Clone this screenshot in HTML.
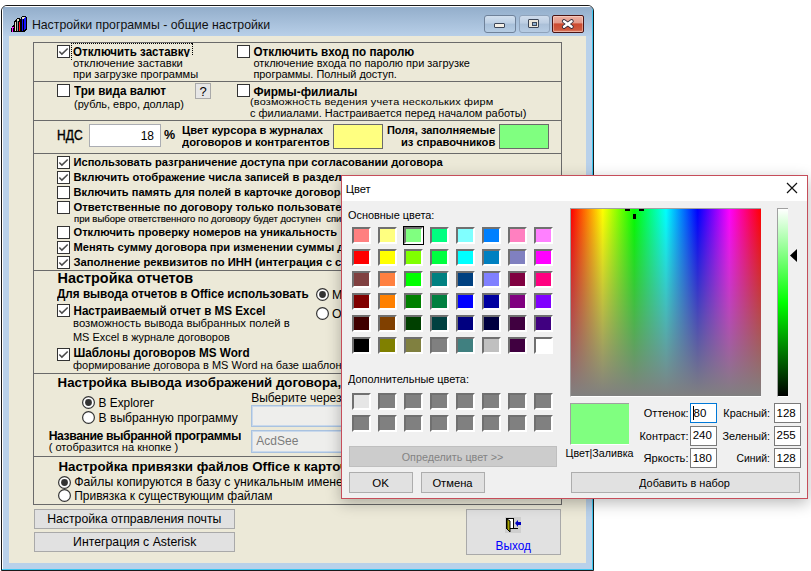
<!DOCTYPE html>
<html><head><meta charset="utf-8"><style>
html,body{margin:0;padding:0;}
body{width:811px;height:571px;overflow:hidden;position:relative;background:#fff;font-family:"Liberation Sans", sans-serif;}
div{box-sizing:content-box;}
</style></head><body>
<div style="position:absolute;left:1px;top:5px;width:591px;height:564px;border:1px solid #1a1a1a;border-top-left-radius:6px;border-top-right-radius:6px;background:#b9d1ea;overflow:hidden"><div style="position:absolute;left:0;top:0;right:0;height:1px;background:#fff"></div><div style="position:absolute;left:0;top:0;bottom:0;width:1px;background:#fff"></div><div style="position:absolute;right:0;top:0;bottom:0;width:1px;background:#3bc6f0"></div><div style="position:absolute;left:0;bottom:0;right:0;height:1px;background:#3bc6f0"></div><div style="position:absolute;left:1px;top:1px;right:1px;height:29px;background:linear-gradient(#93aecb,#b8cfe8)"></div></div>
<div style="position:absolute;left:9px;top:36px;width:577px;height:527px;background:#ece9d8"></div>
<svg style="position:absolute;left:11px;top:16px" width="16" height="16" shape-rendering="crispEdges"><rect x="11" y="0" width="1" height="1" fill="#000"/><rect x="12" y="0" width="1" height="1" fill="#000"/><rect x="13" y="0" width="1" height="1" fill="#000"/><rect x="14" y="0" width="1" height="1" fill="#000"/><rect x="10" y="1" width="1" height="1" fill="#000"/><rect x="11" y="1" width="1" height="1" fill="#e6e2c8"/><rect x="12" y="1" width="1" height="1" fill="#e6e2c8"/><rect x="13" y="1" width="1" height="1" fill="#e6e2c8"/><rect x="14" y="1" width="1" height="1" fill="#1414ff"/><rect x="15" y="1" width="1" height="1" fill="#000"/><rect x="6" y="2" width="1" height="1" fill="#000"/><rect x="7" y="2" width="1" height="1" fill="#000"/><rect x="8" y="2" width="1" height="1" fill="#000"/><rect x="10" y="2" width="1" height="1" fill="#000"/><rect x="11" y="2" width="1" height="1" fill="#e6e2c8"/><rect x="12" y="2" width="1" height="1" fill="#e6e2c8"/><rect x="13" y="2" width="1" height="1" fill="#1414ff"/><rect x="14" y="2" width="1" height="1" fill="#1414ff"/><rect x="15" y="2" width="1" height="1" fill="#000"/><rect x="5" y="3" width="1" height="1" fill="#000"/><rect x="6" y="3" width="1" height="1" fill="#e6e2c8"/><rect x="7" y="3" width="1" height="1" fill="#e6e2c8"/><rect x="8" y="3" width="1" height="1" fill="#000"/><rect x="9" y="3" width="1" height="1" fill="#000"/><rect x="10" y="3" width="1" height="1" fill="#000"/><rect x="11" y="3" width="1" height="1" fill="#1414ff"/><rect x="12" y="3" width="1" height="1" fill="#000"/><rect x="13" y="3" width="1" height="1" fill="#1414ff"/><rect x="14" y="3" width="1" height="1" fill="#1414ff"/><rect x="15" y="3" width="1" height="1" fill="#000"/><rect x="4" y="4" width="1" height="1" fill="#000"/><rect x="5" y="4" width="1" height="1" fill="#000"/><rect x="6" y="4" width="1" height="1" fill="#e6e2c8"/><rect x="7" y="4" width="1" height="1" fill="#e6e2c8"/><rect x="8" y="4" width="1" height="1" fill="#000"/><rect x="9" y="4" width="1" height="1" fill="#000"/><rect x="10" y="4" width="1" height="1" fill="#000"/><rect x="11" y="4" width="1" height="1" fill="#1414ff"/><rect x="12" y="4" width="1" height="1" fill="#000"/><rect x="13" y="4" width="1" height="1" fill="#1414ff"/><rect x="14" y="4" width="1" height="1" fill="#1414ff"/><rect x="15" y="4" width="1" height="1" fill="#000"/><rect x="3" y="5" width="1" height="1" fill="#000"/><rect x="4" y="5" width="1" height="1" fill="#000"/><rect x="5" y="5" width="1" height="1" fill="#000"/><rect x="6" y="5" width="1" height="1" fill="#9aa49c"/><rect x="7" y="5" width="1" height="1" fill="#000"/><rect x="8" y="5" width="1" height="1" fill="#000"/><rect x="9" y="5" width="1" height="1" fill="#000"/><rect x="10" y="5" width="1" height="1" fill="#000"/><rect x="11" y="5" width="1" height="1" fill="#1414ff"/><rect x="12" y="5" width="1" height="1" fill="#000"/><rect x="13" y="5" width="1" height="1" fill="#1414ff"/><rect x="14" y="5" width="1" height="1" fill="#1414ff"/><rect x="15" y="5" width="1" height="1" fill="#000"/><rect x="3" y="6" width="1" height="1" fill="#000"/><rect x="4" y="6" width="1" height="1" fill="#e6e2c8"/><rect x="5" y="6" width="1" height="1" fill="#000"/><rect x="6" y="6" width="1" height="1" fill="#9aa49c"/><rect x="7" y="6" width="1" height="1" fill="#000"/><rect x="8" y="6" width="1" height="1" fill="#ff1818"/><rect x="9" y="6" width="1" height="1" fill="#000"/><rect x="10" y="6" width="1" height="1" fill="#000"/><rect x="11" y="6" width="1" height="1" fill="#1414ff"/><rect x="12" y="6" width="1" height="1" fill="#000"/><rect x="13" y="6" width="1" height="1" fill="#1414ff"/><rect x="14" y="6" width="1" height="1" fill="#1414ff"/><rect x="15" y="6" width="1" height="1" fill="#000"/><rect x="3" y="7" width="1" height="1" fill="#000"/><rect x="4" y="7" width="1" height="1" fill="#e6e2c8"/><rect x="5" y="7" width="1" height="1" fill="#000"/><rect x="6" y="7" width="1" height="1" fill="#9aa49c"/><rect x="7" y="7" width="1" height="1" fill="#000"/><rect x="8" y="7" width="1" height="1" fill="#ff1818"/><rect x="9" y="7" width="1" height="1" fill="#000"/><rect x="10" y="7" width="1" height="1" fill="#000"/><rect x="11" y="7" width="1" height="1" fill="#1414ff"/><rect x="12" y="7" width="1" height="1" fill="#000"/><rect x="13" y="7" width="1" height="1" fill="#1414ff"/><rect x="14" y="7" width="1" height="1" fill="#1414ff"/><rect x="15" y="7" width="1" height="1" fill="#000"/><rect x="3" y="8" width="1" height="1" fill="#000"/><rect x="4" y="8" width="1" height="1" fill="#e6e2c8"/><rect x="5" y="8" width="1" height="1" fill="#000"/><rect x="6" y="8" width="1" height="1" fill="#9aa49c"/><rect x="7" y="8" width="1" height="1" fill="#000"/><rect x="8" y="8" width="1" height="1" fill="#ff1818"/><rect x="9" y="8" width="1" height="1" fill="#000"/><rect x="10" y="8" width="1" height="1" fill="#000"/><rect x="11" y="8" width="1" height="1" fill="#1414ff"/><rect x="12" y="8" width="1" height="1" fill="#000"/><rect x="13" y="8" width="1" height="1" fill="#1414ff"/><rect x="14" y="8" width="1" height="1" fill="#1414ff"/><rect x="15" y="8" width="1" height="1" fill="#000"/><rect x="2" y="9" width="1" height="1" fill="#000"/><rect x="3" y="9" width="1" height="1" fill="#000"/><rect x="4" y="9" width="1" height="1" fill="#e6e2c8"/><rect x="5" y="9" width="1" height="1" fill="#000"/><rect x="6" y="9" width="1" height="1" fill="#9aa49c"/><rect x="7" y="9" width="1" height="1" fill="#000"/><rect x="8" y="9" width="1" height="1" fill="#ff1818"/><rect x="9" y="9" width="1" height="1" fill="#000"/><rect x="10" y="9" width="1" height="1" fill="#000"/><rect x="11" y="9" width="1" height="1" fill="#1414ff"/><rect x="12" y="9" width="1" height="1" fill="#000"/><rect x="13" y="9" width="1" height="1" fill="#1414ff"/><rect x="14" y="9" width="1" height="1" fill="#1414ff"/><rect x="15" y="9" width="1" height="1" fill="#000"/><rect x="1" y="10" width="1" height="1" fill="#000"/><rect x="2" y="10" width="1" height="1" fill="#000"/><rect x="3" y="10" width="1" height="1" fill="#000"/><rect x="4" y="10" width="1" height="1" fill="#e6e2c8"/><rect x="5" y="10" width="1" height="1" fill="#000"/><rect x="6" y="10" width="1" height="1" fill="#9aa49c"/><rect x="7" y="10" width="1" height="1" fill="#000"/><rect x="8" y="10" width="1" height="1" fill="#ff1818"/><rect x="9" y="10" width="1" height="1" fill="#000"/><rect x="10" y="10" width="1" height="1" fill="#000"/><rect x="11" y="10" width="1" height="1" fill="#1414ff"/><rect x="12" y="10" width="1" height="1" fill="#000"/><rect x="13" y="10" width="1" height="1" fill="#1414ff"/><rect x="14" y="10" width="1" height="1" fill="#1414ff"/><rect x="15" y="10" width="1" height="1" fill="#000"/><rect x="1" y="11" width="1" height="1" fill="#ff10ff"/><rect x="2" y="11" width="1" height="1" fill="#ff10ff"/><rect x="3" y="11" width="1" height="1" fill="#000"/><rect x="4" y="11" width="1" height="1" fill="#e6e2c8"/><rect x="5" y="11" width="1" height="1" fill="#000"/><rect x="6" y="11" width="1" height="1" fill="#9aa49c"/><rect x="7" y="11" width="1" height="1" fill="#000"/><rect x="8" y="11" width="1" height="1" fill="#ff1818"/><rect x="9" y="11" width="1" height="1" fill="#000"/><rect x="10" y="11" width="1" height="1" fill="#000"/><rect x="11" y="11" width="1" height="1" fill="#1414ff"/><rect x="12" y="11" width="1" height="1" fill="#000"/><rect x="13" y="11" width="1" height="1" fill="#1414ff"/><rect x="14" y="11" width="1" height="1" fill="#1414ff"/><rect x="15" y="11" width="1" height="1" fill="#000"/><rect x="0" y="12" width="1" height="1" fill="#000"/><rect x="1" y="12" width="1" height="1" fill="#ff10ff"/><rect x="2" y="12" width="1" height="1" fill="#000"/><rect x="3" y="12" width="1" height="1" fill="#000"/><rect x="4" y="12" width="1" height="1" fill="#e6e2c8"/><rect x="5" y="12" width="1" height="1" fill="#000"/><rect x="6" y="12" width="1" height="1" fill="#9aa49c"/><rect x="7" y="12" width="1" height="1" fill="#000"/><rect x="8" y="12" width="1" height="1" fill="#ff1818"/><rect x="9" y="12" width="1" height="1" fill="#000"/><rect x="10" y="12" width="1" height="1" fill="#000"/><rect x="11" y="12" width="1" height="1" fill="#1414ff"/><rect x="12" y="12" width="1" height="1" fill="#000"/><rect x="13" y="12" width="1" height="1" fill="#1414ff"/><rect x="14" y="12" width="1" height="1" fill="#1414ff"/><rect x="15" y="12" width="1" height="1" fill="#000"/><rect x="0" y="13" width="1" height="1" fill="#000"/><rect x="1" y="13" width="1" height="1" fill="#ff10ff"/><rect x="2" y="13" width="1" height="1" fill="#000"/><rect x="3" y="13" width="1" height="1" fill="#000"/><rect x="4" y="13" width="1" height="1" fill="#e6e2c8"/><rect x="5" y="13" width="1" height="1" fill="#000"/><rect x="6" y="13" width="1" height="1" fill="#9aa49c"/><rect x="7" y="13" width="1" height="1" fill="#000"/><rect x="8" y="13" width="1" height="1" fill="#ff1818"/><rect x="9" y="13" width="1" height="1" fill="#000"/><rect x="10" y="13" width="1" height="1" fill="#000"/><rect x="11" y="13" width="1" height="1" fill="#1414ff"/><rect x="12" y="13" width="1" height="1" fill="#000"/><rect x="13" y="13" width="1" height="1" fill="#1414ff"/><rect x="14" y="13" width="1" height="1" fill="#000"/><rect x="15" y="13" width="1" height="1" fill="#000"/><rect x="0" y="14" width="1" height="1" fill="#000"/><rect x="1" y="14" width="1" height="1" fill="#ff10ff"/><rect x="2" y="14" width="1" height="1" fill="#000"/><rect x="3" y="14" width="1" height="1" fill="#000"/><rect x="4" y="14" width="1" height="1" fill="#e6e2c8"/><rect x="5" y="14" width="1" height="1" fill="#000"/><rect x="6" y="14" width="1" height="1" fill="#9aa49c"/><rect x="7" y="14" width="1" height="1" fill="#000"/><rect x="8" y="14" width="1" height="1" fill="#ff1818"/><rect x="9" y="14" width="1" height="1" fill="#000"/><rect x="10" y="14" width="1" height="1" fill="#000"/><rect x="11" y="14" width="1" height="1" fill="#1414ff"/><rect x="12" y="14" width="1" height="1" fill="#000"/><rect x="13" y="14" width="1" height="1" fill="#000"/><rect x="14" y="14" width="1" height="1" fill="#000"/><rect x="0" y="15" width="1" height="1" fill="#000"/><rect x="1" y="15" width="1" height="1" fill="#ff10ff"/><rect x="2" y="15" width="1" height="1" fill="#000"/><rect x="3" y="15" width="1" height="1" fill="#000"/><rect x="4" y="15" width="1" height="1" fill="#000"/><rect x="5" y="15" width="1" height="1" fill="#000"/><rect x="6" y="15" width="1" height="1" fill="#000"/><rect x="7" y="15" width="1" height="1" fill="#000"/><rect x="8" y="15" width="1" height="1" fill="#000"/><rect x="9" y="15" width="1" height="1" fill="#000"/><rect x="10" y="15" width="1" height="1" fill="#000"/><rect x="11" y="15" width="1" height="1" fill="#000"/><rect x="12" y="15" width="1" height="1" fill="#000"/><rect x="13" y="15" width="1" height="1" fill="#000"/></svg>
<div style="position:absolute;left:31.90px;top:14.53px;line-height:20px;font-size:12.31px;font-weight:normal;color:#111;white-space:nowrap;transform:scaleY(1.02);transform-origin:0 14.27px;">Настройки программы - общие настройки</div>
<div style="position:absolute;left:484px;top:15px;width:30px;height:16px;border:1px solid #6f829a;border-radius:3px;background:linear-gradient(#d2e0ef 0%,#bccfe4 45%,#a7bfd9 50%,#b6cde4 100%)"><div style="position:absolute;left:9px;top:7px;width:9px;height:3px;background:#f4efe6;border:1px solid #3c4658;border-radius:1px"></div></div>
<div style="position:absolute;left:519px;top:15px;width:29px;height:16px;border:1px solid #8fa3bb;border-radius:3px;background:linear-gradient(#cfdcec 0%,#bccde2 45%,#abc0d8 50%,#b7cce3 100%)"><div style="position:absolute;left:8px;top:3px;width:9px;height:7px;border:1px solid #3c4658;border-radius:1px;background:#ece6da"><div style="position:absolute;left:3px;top:2px;width:3px;height:2px;border:0.5px solid #3c4658;background:#8fb0d0"></div></div></div>
<div style="position:absolute;left:552px;top:15px;width:30px;height:16px;border:1px solid #4a1414;border-radius:2px;background:linear-gradient(#eeb0a2 0%,#e39a8a 42%,#cc4a30 50%,#cf5a3f 85%,#e08a74 100%);box-shadow:inset 0 0 0 1px rgba(255,230,220,0.45)"><svg style="position:absolute;left:8px;top:3px" width="14" height="11"><path d="M3 2.2 L10.6 7.8 M10.6 2.2 L3 7.8" stroke="#2e2a3a" stroke-width="4" stroke-linecap="round"/><path d="M3 2.2 L10.6 7.8 M10.6 2.2 L3 7.8" stroke="#fff" stroke-width="2.4" stroke-linecap="round"/></svg></div>
<div style="position:absolute;left:33px;top:42px;width:527px;height:461px;border:1px solid #6a6a6a"></div>
<div style="position:absolute;left:34px;top:81px;width:527px;height:1px;background:#6a6a6a"></div>
<div style="position:absolute;left:34px;top:120px;width:527px;height:1px;background:#6a6a6a"></div>
<div style="position:absolute;left:34px;top:153px;width:527px;height:1px;background:#6a6a6a"></div>
<div style="position:absolute;left:34px;top:270px;width:527px;height:1px;background:#6a6a6a"></div>
<div style="position:absolute;left:34px;top:373px;width:527px;height:1px;background:#6a6a6a"></div>
<div style="position:absolute;left:34px;top:456px;width:527px;height:1px;background:#6a6a6a"></div>
<div style="position:absolute;left:57px;top:45px;width:11px;height:11px;border:1px solid #333;background:#fff"><svg width="11" height="11" style="position:absolute;left:0;top:0"><path d="M1.3 5.5 L3.9 8.1 L9.7 2.5" fill="none" stroke="#4a4a4a" stroke-width="1.5"/></svg></div>
<div style="position:absolute;left:73.00px;top:41.99px;line-height:20px;font-size:11.56px;font-weight:bold;color:#000;white-space:nowrap;transform:scaleY(1.04);transform-origin:0 14.01px;">Отключить заставку</div>
<div style="position:absolute;left:160px;top:57px;width:32px;height:4px;background:#ece9d8"></div>
<div style="position:absolute;left:71px;top:43px;width:120px;height:16px;border-style:dotted;border-color:#000;border-width:1px 0 0 1px"></div>
<div style="position:absolute;left:192px;top:43px;width:0;height:12px;border-left:1px dotted #000"></div>
<div style="position:absolute;left:73.00px;top:52.72px;line-height:20px;font-size:11.2px;font-weight:normal;color:#000;white-space:nowrap;transform:scaleY(1.02);transform-origin:0 13.88px;">отключение заставки</div>
<div style="position:absolute;left:73.00px;top:63.97px;line-height:20px;font-size:11.05px;font-weight:normal;color:#000;white-space:nowrap;transform:scaleY(1.02);transform-origin:0 13.83px;">при загрузке программы</div>
<div style="position:absolute;left:237px;top:45px;width:11px;height:11px;border:1px solid #333;background:#fff"></div>
<div style="position:absolute;left:253.40px;top:41.76px;line-height:20px;font-size:11.66px;font-weight:bold;color:#000;white-space:nowrap;transform:scaleY(1.04);transform-origin:0 14.04px;">Отключить вход по паролю</div>
<div style="position:absolute;left:253.40px;top:52.80px;line-height:20px;font-size:10.97px;font-weight:normal;color:#000;white-space:nowrap;transform:scaleY(1.02);transform-origin:0 13.80px;">отключение входа по паролю при загрузке</div>
<div style="position:absolute;left:253.40px;top:64.02px;line-height:20px;font-size:10.92px;font-weight:normal;color:#000;white-space:nowrap;transform:scaleY(1.02);transform-origin:0 13.78px;">программы. Полный доступ.</div>
<div style="position:absolute;left:57px;top:84px;width:11px;height:11px;border:1px solid #333;background:#fff"></div>
<div style="position:absolute;left:74.00px;top:80.76px;line-height:20px;font-size:11.67px;font-weight:bold;color:#000;white-space:nowrap;transform:scaleY(1.04);transform-origin:0 14.04px;">Три вида валют</div>
<div style="position:absolute;left:74.00px;top:93.61px;line-height:20px;font-size:10.93px;font-weight:normal;color:#000;white-space:nowrap;transform:scaleY(1.02);transform-origin:0 13.79px;">(рубль, евро, доллар)</div>
<div style="position:absolute;left:195px;top:83px;width:14px;height:14px;border:1px solid #a9a9a9;background:#e6e6e6"></div>
<div style="position:absolute;left:199.50px;top:81.50px;line-height:20px;font-size:13px;font-weight:normal;color:#000;white-space:nowrap;">?</div>
<div style="position:absolute;left:237px;top:84px;width:11px;height:11px;border:1px solid #333;background:#fff"></div>
<div style="position:absolute;left:253.40px;top:82.19px;line-height:20px;font-size:11.85px;font-weight:bold;color:#000;white-space:nowrap;transform:scaleY(1.04);transform-origin:0 14.11px;">Фирмы-филиалы</div>
<div style="position:absolute;left:250.00px;top:90.62px;line-height:20px;font-size:10.9px;font-weight:normal;color:#000;white-space:nowrap;letter-spacing:0.177px;transform:scaleY(0.9);transform-origin:0 13.78px;">(возможность ведения учета нескольких фирм</div>
<div style="position:absolute;left:250.00px;top:102.59px;line-height:20px;font-size:11.01px;font-weight:normal;color:#000;white-space:nowrap;transform:scaleY(1.02);transform-origin:0 13.81px;">с филиалами. Настраивается перед началом работы)</div>
<div style="position:absolute;left:57.40px;top:125.52px;line-height:20px;font-size:13.8px;font-weight:normal;color:#000;white-space:nowrap;transform:scale(0.8746,1.0);transform-origin:0 14.78px;-webkit-text-stroke:0.35px #000;">НДС</div>
<div style="position:absolute;left:89px;top:124px;width:70px;height:21px;border:1px solid #abadb3;background:#fff"></div>
<div style="position:absolute;right:657.00px;text-align:right;top:125.54px;line-height:20px;font-size:12px;font-weight:normal;color:#000;white-space:nowrap;transform:scaleY(1.02);transform-origin:0 14.16px;">18</div>
<div style="position:absolute;left:163.90px;top:125.37px;line-height:20px;font-size:12.5px;font-weight:bold;color:#000;white-space:nowrap;transform:scaleY(1.04);transform-origin:0 14.33px;">%</div>
<div style="position:absolute;left:182.00px;top:120.11px;line-height:20px;font-size:11.22px;font-weight:bold;color:#000;white-space:nowrap;transform:scaleY(1.04);transform-origin:0 13.89px;">Цвет курсора в журналах</div>
<div style="position:absolute;left:182.00px;top:131.79px;line-height:20px;font-size:11.28px;font-weight:bold;color:#000;white-space:nowrap;transform:scaleY(1.04);transform-origin:0 13.91px;">договоров и контрагентов</div>
<div style="position:absolute;left:333px;top:124px;width:48px;height:23px;background:#ffff80;border:1px solid #6a6a6a"></div>
<div style="position:absolute;right:315.70px;text-align:right;top:120.17px;line-height:20px;font-size:11.04px;font-weight:bold;color:#000;white-space:nowrap;transform:scaleY(1.04);transform-origin:0 13.83px;">Поля, заполняемые</div>
<div style="position:absolute;right:315.70px;text-align:right;top:131.81px;line-height:20px;font-size:11.23px;font-weight:bold;color:#000;white-space:nowrap;transform:scaleY(1.04);transform-origin:0 13.89px;">из справочников</div>
<div style="position:absolute;left:499px;top:124px;width:48px;height:23px;background:#80ff80;border:1px solid #6a6a6a"></div>
<div style="position:absolute;left:57px;top:156px;width:11px;height:11px;border:1px solid #333;background:#fff"><svg width="11" height="11" style="position:absolute;left:0;top:0"><path d="M1.3 5.5 L3.9 8.1 L9.7 2.5" fill="none" stroke="#4a4a4a" stroke-width="1.5"/></svg></div>
<div style="position:absolute;left:73.50px;top:151.95px;line-height:20px;font-size:11.12px;font-weight:bold;color:#000;white-space:nowrap;transform:scaleY(1.04);transform-origin:0 13.85px;">Использовать разграничение доступа при согласовании договора</div>
<div style="position:absolute;left:57px;top:171px;width:11px;height:11px;border:1px solid #333;background:#fff"><svg width="11" height="11" style="position:absolute;left:0;top:0"><path d="M1.3 5.5 L3.9 8.1 L9.7 2.5" fill="none" stroke="#4a4a4a" stroke-width="1.5"/></svg></div>
<div style="position:absolute;left:73.50px;top:166.91px;line-height:20px;font-size:11.22px;font-weight:bold;color:#000;white-space:nowrap;transform:scaleY(1.04);transform-origin:0 13.89px;">Включить отображение числа записей в разделах журнала</div>
<div style="position:absolute;left:57px;top:186px;width:11px;height:11px;border:1px solid #333;background:#fff"></div>
<div style="position:absolute;left:73.50px;top:181.96px;line-height:20px;font-size:11.07px;font-weight:bold;color:#000;white-space:nowrap;transform:scaleY(1.04);transform-origin:0 13.84px;">Включить память для полей в карточке договора</div>
<div style="position:absolute;left:57px;top:201px;width:11px;height:11px;border:1px solid #333;background:#fff"></div>
<div style="position:absolute;left:73.50px;top:196.89px;line-height:20px;font-size:11.27px;font-weight:bold;color:#000;white-space:nowrap;transform:scaleY(1.04);transform-origin:0 13.91px;">Ответственные по договору только пользователи</div>
<div style="position:absolute;left:57px;top:226px;width:11px;height:11px;border:1px solid #333;background:#fff"></div>
<div style="position:absolute;left:73.50px;top:221.95px;line-height:20px;font-size:11.12px;font-weight:bold;color:#000;white-space:nowrap;transform:scaleY(1.04);transform-origin:0 13.85px;">Отключить проверку номеров на уникальность</div>
<div style="position:absolute;left:57px;top:241px;width:11px;height:11px;border:1px solid #333;background:#fff"><svg width="11" height="11" style="position:absolute;left:0;top:0"><path d="M1.3 5.5 L3.9 8.1 L9.7 2.5" fill="none" stroke="#4a4a4a" stroke-width="1.5"/></svg></div>
<div style="position:absolute;left:73.50px;top:236.95px;line-height:20px;font-size:11.12px;font-weight:bold;color:#000;white-space:nowrap;transform:scaleY(1.04);transform-origin:0 13.85px;">Менять сумму договора при изменении суммы допсоглашений</div>
<div style="position:absolute;left:57px;top:256px;width:11px;height:11px;border:1px solid #333;background:#fff"><svg width="11" height="11" style="position:absolute;left:0;top:0"><path d="M1.3 5.5 L3.9 8.1 L9.7 2.5" fill="none" stroke="#4a4a4a" stroke-width="1.5"/></svg></div>
<div style="position:absolute;left:73.50px;top:251.90px;line-height:20px;font-size:11.26px;font-weight:bold;color:#000;white-space:nowrap;transform:scaleY(1.04);transform-origin:0 13.90px;">Заполнение реквизитов по ИНН (интеграция с сервисом)</div>
<div style="position:absolute;left:74.00px;top:208.71px;line-height:20px;font-size:9.5px;font-weight:normal;color:#000;white-space:nowrap;transform:scaleY(1.02);transform-origin:0 13.29px;-webkit-text-stroke:0.15px #000;">при выборе ответственного по договору будет доступен&nbsp;&nbsp;список</div>
<div style="position:absolute;left:57.50px;top:267.79px;line-height:20px;font-size:14.45px;font-weight:bold;color:#000;white-space:nowrap;">Настройка отчетов</div>
<div style="position:absolute;left:57.00px;top:283.94px;line-height:20px;font-size:11.73px;font-weight:bold;color:#000;white-space:nowrap;transform:scaleY(1.04);transform-origin:0 14.06px;">Для вывода отчетов в Office использовать</div>
<svg style="position:absolute;left:316px;top:288px" width="13" height="13"><circle cx="6.5" cy="6.5" r="5.9" fill="#fff" stroke="#333" stroke-width="1.2"/><circle cx="6.5" cy="6.5" r="3.4" fill="#333"/></svg>
<div style="position:absolute;left:332.00px;top:284.94px;line-height:20px;font-size:12.3px;font-weight:normal;color:#000;white-space:nowrap;transform:scaleY(1.02);transform-origin:0 14.26px;">MS Office</div>
<svg style="position:absolute;left:316px;top:307px" width="13" height="13"><circle cx="6.5" cy="6.5" r="5.9" fill="#fff" stroke="#333" stroke-width="1.2"/></svg>
<div style="position:absolute;left:332.00px;top:303.54px;line-height:20px;font-size:12.3px;font-weight:normal;color:#000;white-space:nowrap;transform:scaleY(1.02);transform-origin:0 14.26px;">OpenOffice</div>
<div style="position:absolute;left:57px;top:304px;width:11px;height:11px;border:1px solid #333;background:#fff"><svg width="11" height="11" style="position:absolute;left:0;top:0"><path d="M1.3 5.5 L3.9 8.1 L9.7 2.5" fill="none" stroke="#4a4a4a" stroke-width="1.5"/></svg></div>
<div style="position:absolute;left:73.50px;top:301.18px;line-height:20px;font-size:11.61px;font-weight:bold;color:#000;white-space:nowrap;transform:scaleY(1.04);transform-origin:0 14.02px;">Настраиваемый отчет в MS Excel</div>
<div style="position:absolute;left:73.00px;top:312.87px;line-height:20px;font-size:11.34px;font-weight:normal;color:#000;white-space:nowrap;transform:scaleY(1.02);transform-origin:0 13.93px;">возможность вывода выбранных полей в</div>
<div style="position:absolute;left:73.00px;top:326.70px;line-height:20px;font-size:10.96px;font-weight:normal;color:#000;white-space:nowrap;transform:scaleY(1.02);transform-origin:0 13.80px;">MS Excel в журнале договоров</div>
<div style="position:absolute;left:57px;top:348px;width:11px;height:11px;border:1px solid #333;background:#fff"><svg width="11" height="11" style="position:absolute;left:0;top:0"><path d="M1.3 5.5 L3.9 8.1 L9.7 2.5" fill="none" stroke="#4a4a4a" stroke-width="1.5"/></svg></div>
<div style="position:absolute;left:73.50px;top:343.14px;line-height:20px;font-size:11.72px;font-weight:bold;color:#000;white-space:nowrap;transform:scaleY(1.04);transform-origin:0 14.06px;">Шаблоны договоров MS Word</div>
<div style="position:absolute;left:73.00px;top:354.99px;line-height:20px;font-size:11px;font-weight:normal;color:#000;white-space:nowrap;transform:scaleY(1.02);transform-origin:0 13.81px;">формирование договора в MS Word на базе шаблонов</div>
<div style="position:absolute;left:57.60px;top:373.01px;line-height:20px;font-size:13.26px;font-weight:bold;color:#000;white-space:nowrap;">Настройка вывода изображений договора, документов</div>
<div style="position:absolute;left:251.20px;top:387.94px;line-height:20px;font-size:12px;font-weight:normal;color:#000;white-space:nowrap;transform:scaleY(1.02);transform-origin:0 14.16px;">Выберите через</div>
<svg style="position:absolute;left:82px;top:396px" width="13" height="13"><circle cx="6.5" cy="6.5" r="5.9" fill="#fff" stroke="#333" stroke-width="1.2"/><circle cx="6.5" cy="6.5" r="3.4" fill="#333"/></svg>
<div style="position:absolute;left:98.60px;top:392.99px;line-height:20px;font-size:11.85px;font-weight:normal;color:#000;white-space:nowrap;transform:scaleY(1.02);transform-origin:0 14.11px;">В Explorer</div>
<svg style="position:absolute;left:82px;top:411px" width="13" height="13"><circle cx="6.5" cy="6.5" r="5.9" fill="#fff" stroke="#333" stroke-width="1.2"/></svg>
<div style="position:absolute;left:98.60px;top:407.51px;line-height:20px;font-size:12.09px;font-weight:normal;color:#000;white-space:nowrap;transform:scaleY(1.02);transform-origin:0 14.19px;">В выбранную программу</div>
<div style="position:absolute;left:48.70px;top:425.97px;line-height:20px;font-size:12.2px;font-weight:bold;color:#000;white-space:nowrap;letter-spacing:-0.404px;transform:scaleY(1.04);transform-origin:0 14.23px;">Название выбранной программы</div>
<div style="position:absolute;left:48.70px;top:437.46px;line-height:20px;font-size:11.08px;font-weight:normal;color:#000;white-space:nowrap;transform:scaleY(1.02);transform-origin:0 13.84px;">( отобразится на кнопке )</div>
<div style="position:absolute;left:251px;top:405px;width:120px;height:20px;background:#eeeeec;border:1px solid #a9c2e0;box-shadow:inset 0 0 0 1px #c9d9ec"></div>
<div style="position:absolute;left:251px;top:430px;width:120px;height:21px;background:#eeeeec;border:1px solid #a9c2e0;box-shadow:inset 0 0 0 1px #c9d9ec"></div>
<div style="position:absolute;left:256.30px;top:431.44px;line-height:20px;font-size:12px;font-weight:normal;color:#7c7c7c;white-space:nowrap;transform:scaleY(1.02);transform-origin:0 14.16px;">AcdSee</div>
<div style="position:absolute;left:58.40px;top:457.19px;line-height:20px;font-size:13.3px;font-weight:bold;color:#000;white-space:nowrap;">Настройка привязки файлов Office к карточке</div>
<svg style="position:absolute;left:58px;top:476px" width="13" height="13"><circle cx="6.5" cy="6.5" r="5.9" fill="#fff" stroke="#333" stroke-width="1.2"/><circle cx="6.5" cy="6.5" r="3.4" fill="#333"/></svg>
<div style="position:absolute;left:74.20px;top:471.94px;line-height:20px;font-size:12.29px;font-weight:normal;color:#000;white-space:nowrap;transform:scaleY(1.02);transform-origin:0 14.26px;">Файлы копируются в базу с уникальным именем</div>
<svg style="position:absolute;left:58px;top:489px" width="13" height="13"><circle cx="6.5" cy="6.5" r="5.9" fill="#fff" stroke="#333" stroke-width="1.2"/></svg>
<div style="position:absolute;left:74.20px;top:485.85px;line-height:20px;font-size:11.98px;font-weight:normal;color:#000;white-space:nowrap;transform:scaleY(1.02);transform-origin:0 14.15px;">Привязка к существующим файлам</div>
<div style="position:absolute;left:34px;top:509px;width:199px;height:18px;background:#e1e1e1;border:1px solid #a9a9a9"></div>
<div style="position:absolute;left:47.20px;top:509.34px;line-height:20px;font-size:12.28px;font-weight:normal;color:#000;white-space:nowrap;transform:scaleY(1.02);transform-origin:0 14.26px;">Настройка отправления почты</div>
<div style="position:absolute;left:34px;top:532px;width:199px;height:18px;background:#e1e1e1;border:1px solid #a9a9a9"></div>
<div style="position:absolute;left:73.10px;top:532.34px;line-height:20px;font-size:12.29px;font-weight:normal;color:#000;white-space:nowrap;transform:scaleY(1.02);transform-origin:0 14.26px;">Интеграция с Asterisk</div>
<div style="position:absolute;left:466px;top:509px;width:93px;height:44px;background:#e1e1e1;border:1px solid #a9a9a9"></div>
<svg style="position:absolute;left:505px;top:517px" width="17" height="16" shape-rendering="crispEdges">
<rect x="0" y="0" width="16" height="16" fill="#cfcfcf"/>
<rect x="1" y="1" width="8" height="11" fill="#000"/>
<rect x="2" y="2" width="6" height="9" fill="#fff"/>
<rect x="1" y="11" width="12" height="1" fill="#000"/>
<path d="M2 2 L5 4 L5 15 L2 12 Z" fill="#a8a400" stroke="#000" stroke-width="1" shape-rendering="auto"/>
<path d="M10 6 L13 3 L13 5 L16 5 L16 8 L13 8 L13 10 Z" fill="#0000c0" shape-rendering="auto"/>
</svg>
<div style="position:absolute;left:495.60px;top:535.90px;line-height:20px;font-size:11.83px;font-weight:normal;color:#0000ff;white-space:nowrap;transform:scaleY(1.02);transform-origin:0 14.10px;">Выход</div>
<div style="position:absolute;left:341px;top:175px;width:465px;height:322px;border:1px solid #c64d5a;background:#f0f0f0;box-shadow:0 4px 14px rgba(0,0,0,0.28)"></div>
<div style="position:absolute;left:342px;top:176px;width:465px;height:25px;background:#fff"></div>
<div style="position:absolute;left:345.70px;top:178.53px;line-height:20px;font-size:11.16px;font-weight:normal;color:#000;white-space:nowrap;transform:scaleY(1.02);transform-origin:0 13.87px;">Цвет</div>
<svg style="position:absolute;left:786px;top:182px" width="12" height="12"><path d="M1 1 L11 11 M11 1 L1 11" stroke="#111" stroke-width="1.2"/></svg>
<div style="position:absolute;left:348.00px;top:205.12px;line-height:20px;font-size:10.92px;font-weight:normal;color:#000;white-space:nowrap;transform:scaleY(1.02);transform-origin:0 13.78px;">Основные цвета:</div>
<div style="position:absolute;left:352px;top:227px;width:15px;height:13px;background:#FF8080;border-style:solid;border-width:2px;border-color:#707070 #fff #fff #707070"></div>
<div style="position:absolute;left:378px;top:227px;width:15px;height:13px;background:#FFFF80;border-style:solid;border-width:2px;border-color:#707070 #fff #fff #707070"></div>
<div style="position:absolute;left:404px;top:227px;width:15px;height:13px;background:#80FF80;border-style:solid;border-width:2px;border-color:#707070 #fff #fff #707070"></div>
<div style="position:absolute;left:430px;top:227px;width:15px;height:13px;background:#00FF80;border-style:solid;border-width:2px;border-color:#707070 #fff #fff #707070"></div>
<div style="position:absolute;left:456px;top:227px;width:15px;height:13px;background:#80FFFF;border-style:solid;border-width:2px;border-color:#707070 #fff #fff #707070"></div>
<div style="position:absolute;left:482px;top:227px;width:15px;height:13px;background:#0080FF;border-style:solid;border-width:2px;border-color:#707070 #fff #fff #707070"></div>
<div style="position:absolute;left:508px;top:227px;width:15px;height:13px;background:#FF80C0;border-style:solid;border-width:2px;border-color:#707070 #fff #fff #707070"></div>
<div style="position:absolute;left:534px;top:227px;width:15px;height:13px;background:#FF80FF;border-style:solid;border-width:2px;border-color:#707070 #fff #fff #707070"></div>
<div style="position:absolute;left:352px;top:249px;width:15px;height:13px;background:#FF0000;border-style:solid;border-width:2px;border-color:#707070 #fff #fff #707070"></div>
<div style="position:absolute;left:378px;top:249px;width:15px;height:13px;background:#FFFF00;border-style:solid;border-width:2px;border-color:#707070 #fff #fff #707070"></div>
<div style="position:absolute;left:404px;top:249px;width:15px;height:13px;background:#80FF00;border-style:solid;border-width:2px;border-color:#707070 #fff #fff #707070"></div>
<div style="position:absolute;left:430px;top:249px;width:15px;height:13px;background:#00FF40;border-style:solid;border-width:2px;border-color:#707070 #fff #fff #707070"></div>
<div style="position:absolute;left:456px;top:249px;width:15px;height:13px;background:#00FFFF;border-style:solid;border-width:2px;border-color:#707070 #fff #fff #707070"></div>
<div style="position:absolute;left:482px;top:249px;width:15px;height:13px;background:#0080C0;border-style:solid;border-width:2px;border-color:#707070 #fff #fff #707070"></div>
<div style="position:absolute;left:508px;top:249px;width:15px;height:13px;background:#8080C0;border-style:solid;border-width:2px;border-color:#707070 #fff #fff #707070"></div>
<div style="position:absolute;left:534px;top:249px;width:15px;height:13px;background:#FF00FF;border-style:solid;border-width:2px;border-color:#707070 #fff #fff #707070"></div>
<div style="position:absolute;left:352px;top:271px;width:15px;height:13px;background:#804040;border-style:solid;border-width:2px;border-color:#707070 #fff #fff #707070"></div>
<div style="position:absolute;left:378px;top:271px;width:15px;height:13px;background:#FF8040;border-style:solid;border-width:2px;border-color:#707070 #fff #fff #707070"></div>
<div style="position:absolute;left:404px;top:271px;width:15px;height:13px;background:#00FF00;border-style:solid;border-width:2px;border-color:#707070 #fff #fff #707070"></div>
<div style="position:absolute;left:430px;top:271px;width:15px;height:13px;background:#008080;border-style:solid;border-width:2px;border-color:#707070 #fff #fff #707070"></div>
<div style="position:absolute;left:456px;top:271px;width:15px;height:13px;background:#004080;border-style:solid;border-width:2px;border-color:#707070 #fff #fff #707070"></div>
<div style="position:absolute;left:482px;top:271px;width:15px;height:13px;background:#8080FF;border-style:solid;border-width:2px;border-color:#707070 #fff #fff #707070"></div>
<div style="position:absolute;left:508px;top:271px;width:15px;height:13px;background:#800040;border-style:solid;border-width:2px;border-color:#707070 #fff #fff #707070"></div>
<div style="position:absolute;left:534px;top:271px;width:15px;height:13px;background:#FF0080;border-style:solid;border-width:2px;border-color:#707070 #fff #fff #707070"></div>
<div style="position:absolute;left:352px;top:293px;width:15px;height:13px;background:#800000;border-style:solid;border-width:2px;border-color:#707070 #fff #fff #707070"></div>
<div style="position:absolute;left:378px;top:293px;width:15px;height:13px;background:#FF8000;border-style:solid;border-width:2px;border-color:#707070 #fff #fff #707070"></div>
<div style="position:absolute;left:404px;top:293px;width:15px;height:13px;background:#008000;border-style:solid;border-width:2px;border-color:#707070 #fff #fff #707070"></div>
<div style="position:absolute;left:430px;top:293px;width:15px;height:13px;background:#008040;border-style:solid;border-width:2px;border-color:#707070 #fff #fff #707070"></div>
<div style="position:absolute;left:456px;top:293px;width:15px;height:13px;background:#0000FF;border-style:solid;border-width:2px;border-color:#707070 #fff #fff #707070"></div>
<div style="position:absolute;left:482px;top:293px;width:15px;height:13px;background:#0000A0;border-style:solid;border-width:2px;border-color:#707070 #fff #fff #707070"></div>
<div style="position:absolute;left:508px;top:293px;width:15px;height:13px;background:#800080;border-style:solid;border-width:2px;border-color:#707070 #fff #fff #707070"></div>
<div style="position:absolute;left:534px;top:293px;width:15px;height:13px;background:#8000FF;border-style:solid;border-width:2px;border-color:#707070 #fff #fff #707070"></div>
<div style="position:absolute;left:352px;top:315px;width:15px;height:13px;background:#400000;border-style:solid;border-width:2px;border-color:#707070 #fff #fff #707070"></div>
<div style="position:absolute;left:378px;top:315px;width:15px;height:13px;background:#804000;border-style:solid;border-width:2px;border-color:#707070 #fff #fff #707070"></div>
<div style="position:absolute;left:404px;top:315px;width:15px;height:13px;background:#004000;border-style:solid;border-width:2px;border-color:#707070 #fff #fff #707070"></div>
<div style="position:absolute;left:430px;top:315px;width:15px;height:13px;background:#004040;border-style:solid;border-width:2px;border-color:#707070 #fff #fff #707070"></div>
<div style="position:absolute;left:456px;top:315px;width:15px;height:13px;background:#000080;border-style:solid;border-width:2px;border-color:#707070 #fff #fff #707070"></div>
<div style="position:absolute;left:482px;top:315px;width:15px;height:13px;background:#000040;border-style:solid;border-width:2px;border-color:#707070 #fff #fff #707070"></div>
<div style="position:absolute;left:508px;top:315px;width:15px;height:13px;background:#400040;border-style:solid;border-width:2px;border-color:#707070 #fff #fff #707070"></div>
<div style="position:absolute;left:534px;top:315px;width:15px;height:13px;background:#400080;border-style:solid;border-width:2px;border-color:#707070 #fff #fff #707070"></div>
<div style="position:absolute;left:352px;top:337px;width:15px;height:13px;background:#000000;border-style:solid;border-width:2px;border-color:#707070 #fff #fff #707070"></div>
<div style="position:absolute;left:378px;top:337px;width:15px;height:13px;background:#808000;border-style:solid;border-width:2px;border-color:#707070 #fff #fff #707070"></div>
<div style="position:absolute;left:404px;top:337px;width:15px;height:13px;background:#808040;border-style:solid;border-width:2px;border-color:#707070 #fff #fff #707070"></div>
<div style="position:absolute;left:430px;top:337px;width:15px;height:13px;background:#808080;border-style:solid;border-width:2px;border-color:#707070 #fff #fff #707070"></div>
<div style="position:absolute;left:456px;top:337px;width:15px;height:13px;background:#408080;border-style:solid;border-width:2px;border-color:#707070 #fff #fff #707070"></div>
<div style="position:absolute;left:482px;top:337px;width:15px;height:13px;background:#C0C0C0;border-style:solid;border-width:2px;border-color:#707070 #fff #fff #707070"></div>
<div style="position:absolute;left:508px;top:337px;width:15px;height:13px;background:#400040;border-style:solid;border-width:2px;border-color:#707070 #fff #fff #707070"></div>
<div style="position:absolute;left:534px;top:337px;width:15px;height:13px;background:#FFFFFF;border-style:solid;border-width:2px;border-color:#707070 #fff #fff #707070"></div>
<div style="position:absolute;left:403px;top:226px;width:19px;height:17px;border:1px solid #000"></div>
<div style="position:absolute;left:348.00px;top:369.42px;line-height:20px;font-size:10.92px;font-weight:normal;color:#000;white-space:nowrap;transform:scaleY(1.02);transform-origin:0 13.78px;">Дополнительные цвета:</div>
<div style="position:absolute;left:352px;top:393px;width:15px;height:13px;background:#e6e6e6;border-style:solid;border-width:2px;border-color:#707070 #fff #fff #707070"></div>
<div style="position:absolute;left:378px;top:393px;width:15px;height:13px;background:#808080;border-style:solid;border-width:2px;border-color:#707070 #fff #fff #707070"></div>
<div style="position:absolute;left:404px;top:393px;width:15px;height:13px;background:#808080;border-style:solid;border-width:2px;border-color:#707070 #fff #fff #707070"></div>
<div style="position:absolute;left:430px;top:393px;width:15px;height:13px;background:#808080;border-style:solid;border-width:2px;border-color:#707070 #fff #fff #707070"></div>
<div style="position:absolute;left:456px;top:393px;width:15px;height:13px;background:#808080;border-style:solid;border-width:2px;border-color:#707070 #fff #fff #707070"></div>
<div style="position:absolute;left:482px;top:393px;width:15px;height:13px;background:#808080;border-style:solid;border-width:2px;border-color:#707070 #fff #fff #707070"></div>
<div style="position:absolute;left:508px;top:393px;width:15px;height:13px;background:#808080;border-style:solid;border-width:2px;border-color:#707070 #fff #fff #707070"></div>
<div style="position:absolute;left:534px;top:393px;width:15px;height:13px;background:#808080;border-style:solid;border-width:2px;border-color:#707070 #fff #fff #707070"></div>
<div style="position:absolute;left:352px;top:415px;width:15px;height:13px;background:#808080;border-style:solid;border-width:2px;border-color:#707070 #fff #fff #707070"></div>
<div style="position:absolute;left:378px;top:415px;width:15px;height:13px;background:#808080;border-style:solid;border-width:2px;border-color:#707070 #fff #fff #707070"></div>
<div style="position:absolute;left:404px;top:415px;width:15px;height:13px;background:#808080;border-style:solid;border-width:2px;border-color:#707070 #fff #fff #707070"></div>
<div style="position:absolute;left:430px;top:415px;width:15px;height:13px;background:#808080;border-style:solid;border-width:2px;border-color:#707070 #fff #fff #707070"></div>
<div style="position:absolute;left:456px;top:415px;width:15px;height:13px;background:#808080;border-style:solid;border-width:2px;border-color:#707070 #fff #fff #707070"></div>
<div style="position:absolute;left:482px;top:415px;width:15px;height:13px;background:#808080;border-style:solid;border-width:2px;border-color:#707070 #fff #fff #707070"></div>
<div style="position:absolute;left:508px;top:415px;width:15px;height:13px;background:#808080;border-style:solid;border-width:2px;border-color:#707070 #fff #fff #707070"></div>
<div style="position:absolute;left:534px;top:415px;width:15px;height:13px;background:#808080;border-style:solid;border-width:2px;border-color:#707070 #fff #fff #707070"></div>
<div style="position:absolute;left:349px;top:446px;width:206px;height:19px;background:#cccccc;border:1px solid #bfbfbf"></div>
<div style="position:absolute;left:252.50px;width:400px;text-align:center;top:447.26px;line-height:20px;font-size:10.78px;font-weight:normal;color:#838383;white-space:nowrap;transform:scaleY(1.02);transform-origin:0 13.74px;">Определить цвет &gt;&gt;</div>
<div style="position:absolute;left:349px;top:472px;width:62px;height:19px;background:#e1e1e1;border:1px solid #adadad"></div>
<div style="position:absolute;left:180.50px;width:400px;text-align:center;top:473.02px;line-height:20px;font-size:11.5px;font-weight:normal;color:#000;white-space:nowrap;transform:scaleY(1.02);transform-origin:0 13.98px;">OK</div>
<div style="position:absolute;left:421px;top:472px;width:62px;height:19px;background:#e1e1e1;border:1px solid #adadad"></div>
<div style="position:absolute;left:252.50px;width:400px;text-align:center;top:473.12px;line-height:20px;font-size:11.2px;font-weight:normal;color:#000;white-space:nowrap;transform:scaleY(1.02);transform-origin:0 13.88px;">Отмена</div>
<div style="position:absolute;left:570px;top:208px;width:190px;height:187px;border-style:solid;border-width:1px 0 1px 1px;border-color:#a0a0a0 #fff #fff #a0a0a0;background:linear-gradient(to bottom, rgba(128,128,128,0), #808080), linear-gradient(to right,#ff0000,#ffff00,#00ff00,#00ffff,#0000ff,#ff00ff,#ff0000)"></div>
<div style="position:absolute;left:625px;top:209px;width:5px;height:2px;background:#000"></div>
<div style="position:absolute;left:639px;top:209px;width:5px;height:2px;background:#000"></div>
<div style="position:absolute;left:633px;top:214px;width:3px;height:5px;background:#000"></div>
<div style="position:absolute;left:777px;top:208px;width:10px;height:187px;border-style:solid;border-width:1px 0 1px 1px;border-color:#a0a0a0 #fff #fff #a0a0a0;background:linear-gradient(to bottom,#ffffff 0%,#80ff80 25%,#00ff00 50%,#000000 100%)"></div>
<svg style="position:absolute;left:790px;top:249px" width="8" height="14"><path d="M0 6.5 L7 0 L7 13 Z" fill="#000"/></svg>
<div style="position:absolute;left:570px;top:403px;width:58px;height:40px;background:#80ff80;border-style:solid;border-width:1px 0 1px 1px;border-color:#a0a0a0 #fff #fff #a0a0a0"></div>
<div style="position:absolute;left:565.60px;top:443.29px;line-height:20px;font-size:10.71px;font-weight:normal;color:#000;white-space:nowrap;transform:scaleY(1.02);transform-origin:0 13.71px;">Цвет|Заливка</div>
<div style="position:absolute;right:122.50px;text-align:right;top:403.09px;line-height:20px;font-size:11.0px;font-weight:normal;color:#000;white-space:nowrap;transform:scaleY(1.02);transform-origin:0 13.81px;">Оттенок:</div>
<div style="position:absolute;right:122.50px;text-align:right;top:425.62px;line-height:20px;font-size:10.9px;font-weight:normal;color:#000;white-space:nowrap;transform:scaleY(1.02);transform-origin:0 13.78px;">Контраст:</div>
<div style="position:absolute;right:122.50px;text-align:right;top:448.34px;line-height:20px;font-size:11.14px;font-weight:normal;color:#000;white-space:nowrap;transform:scaleY(1.02);transform-origin:0 13.86px;">Яркость:</div>
<div style="position:absolute;right:41.00px;text-align:right;top:403.14px;line-height:20px;font-size:10.85px;font-weight:normal;color:#000;white-space:nowrap;transform:scaleY(1.02);transform-origin:0 13.76px;">Красный:</div>
<div style="position:absolute;right:41.00px;text-align:right;top:425.64px;line-height:20px;font-size:10.85px;font-weight:normal;color:#000;white-space:nowrap;transform:scaleY(1.02);transform-origin:0 13.76px;">Зеленый:</div>
<div style="position:absolute;right:41.00px;text-align:right;top:448.60px;line-height:20px;font-size:10.38px;font-weight:normal;color:#000;white-space:nowrap;transform:scaleY(1.02);transform-origin:0 13.60px;">Синий:</div>
<div style="position:absolute;left:690px;top:403px;width:25px;height:18px;background:#fff;border:1px solid #0078d7"></div>
<div style="position:absolute;left:690px;top:426px;width:25px;height:18px;background:#fff;border:1px solid #7a7a7a"></div>
<div style="position:absolute;left:690px;top:448px;width:25px;height:18px;background:#fff;border:1px solid #7a7a7a"></div>
<div style="position:absolute;left:774px;top:403px;width:25px;height:18px;background:#fff;border:1px solid #7a7a7a"></div>
<div style="position:absolute;left:774px;top:426px;width:25px;height:18px;background:#fff;border:1px solid #7a7a7a"></div>
<div style="position:absolute;left:774px;top:448px;width:25px;height:18px;background:#fff;border:1px solid #7a7a7a"></div>
<div style="position:absolute;left:693.60px;top:403.22px;line-height:20px;font-size:11.5px;font-weight:normal;color:#000;white-space:nowrap;transform:scaleY(1.02);transform-origin:0 13.98px;">80</div>
<div style="position:absolute;left:693px;top:406px;width:1px;height:14px;background:#000"></div>
<div style="position:absolute;left:692.70px;top:425.22px;line-height:20px;font-size:11.5px;font-weight:normal;color:#000;white-space:nowrap;transform:scaleY(1.02);transform-origin:0 13.98px;">240</div>
<div style="position:absolute;left:692.70px;top:448.02px;line-height:20px;font-size:11.5px;font-weight:normal;color:#000;white-space:nowrap;transform:scaleY(1.02);transform-origin:0 13.98px;">180</div>
<div style="position:absolute;left:776.50px;top:403.22px;line-height:20px;font-size:11.5px;font-weight:normal;color:#000;white-space:nowrap;transform:scaleY(1.02);transform-origin:0 13.98px;">128</div>
<div style="position:absolute;left:776.50px;top:425.22px;line-height:20px;font-size:11.5px;font-weight:normal;color:#000;white-space:nowrap;transform:scaleY(1.02);transform-origin:0 13.98px;">255</div>
<div style="position:absolute;left:776.50px;top:448.02px;line-height:20px;font-size:11.5px;font-weight:normal;color:#000;white-space:nowrap;transform:scaleY(1.02);transform-origin:0 13.98px;">128</div>
<div style="position:absolute;left:571px;top:472px;width:227px;height:19px;background:#e1e1e1;border:1px solid #adadad"></div>
<div style="position:absolute;left:484.50px;width:400px;text-align:center;top:473.20px;line-height:20px;font-size:10.96px;font-weight:normal;color:#000;white-space:nowrap;transform:scaleY(1.02);transform-origin:0 13.80px;">Добавить в набор</div>
</body></html>
